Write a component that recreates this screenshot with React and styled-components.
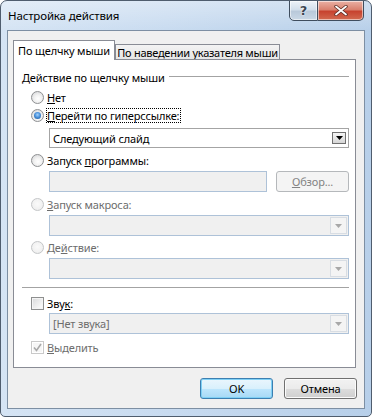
import React from "react";
import styled, { createGlobalStyle } from "styled-components";

const FONT = `"Segoe UI", "Noto Sans", "DejaVu Sans", sans-serif`;

const GlobalStyle = createGlobalStyle`
  html, body { margin: 0; padding: 0; background: #ffffff; }
  body { font-family: ${FONT}; font-size: 11px; letter-spacing: -0.15px; color: #000; }
  * { box-sizing: border-box; }
  u { text-decoration: underline; text-underline-offset: 1px; text-decoration-thickness: 1px; }
`;

const Window = styled.div`
  width: 372px;
  height: 417px;
  display: flex;
  flex-direction: column;
  border: 1px solid #4f5d6e;
  border-radius: 7px 7px 5px 5px;
  background:
    linear-gradient(180deg, rgba(255,255,255,0.35), rgba(255,255,255,0) 30px),
    linear-gradient(90deg, #d5e4f4 0%, #c8dbf0 45%, #b7cfe9 100%);
  padding: 0 6px 7px 6px;
  overflow: hidden;
`;

const TitleBar = styled.div`
  height: 29px;
  display: flex;
  align-items: flex-start;
  justify-content: space-between;
`;

const Title = styled.div`
  line-height: 30px;
  padding-left: 1px;
  font-size: 11.5px;
  color: #000;
`;

const CaptionButtons = styled.div`
  display: flex;
  margin-top: -1px;
  margin-right: 1px;
`;

const CaptionButton = styled.div`
  height: 21px;
  width: ${p => (p.$close ? "46px" : "29px")};
  display: flex;
  align-items: center;
  justify-content: center;
  border: 1px solid #3f4d5e;
  border-left: ${p => (p.$close ? "none" : "1px solid #3f4d5e")};
  border-radius: ${p => (p.$close ? "0 0 5px 0" : "0 0 0 5px")};
  background: ${p =>
    p.$close
      ? "linear-gradient(180deg, #eab1a5 0%, #d9816f 45%, #c7432f 55%, #d26a50 100%)"
      : "linear-gradient(180deg, #eef3f8 0%, #d3dfeb 45%, #b9c9da 55%, #cad8e6 100%)"};
  box-shadow: inset 0 0 0 1px rgba(255,255,255,0.55);
`;

const HelpGlyph = styled.span`
  font-family: "DejaVu Sans", sans-serif;
  font-weight: bold;
  font-size: 13px;
  line-height: 1;
  color: #3b4552;
  text-shadow: 0 0 1px #fff, 0 0 2px #fff;
`;

const Client = styled.div`
  flex: 1;
  display: flex;
  flex-direction: column;
  background: #f0f0f0;
  border: 1px solid #7d8fa3;
  padding: 9px 8px 0 5px;
`;

const TabStrip = styled.div`
  display: flex;
  align-items: flex-end;
  height: 19px;
`;

const Tab = styled.div`
  flex: none;
  width: ${p => (p.$active ? "102px" : "165px")};
  height: ${p => (p.$active ? "20px" : "15px")};
  margin-bottom: ${p => (p.$active ? "-1px" : "0")};
  position: relative;
  z-index: ${p => (p.$active ? 1 : 0)};
  border: 1px solid #898c95;
  border-bottom: none;
  background: ${p => (p.$active ? "#ffffff" : "linear-gradient(180deg, #f3f3f3 0%, #e6e6e6 100%)")};
  display: flex;
  align-items: center;
  justify-content: center;
  white-space: nowrap;
  overflow: hidden;
  line-height: 1;
  letter-spacing: ${p => (p.$active ? "-0.15px" : "-0.25px")};
  padding-top: ${p => (p.$active ? "0" : "1px")};
`;

const Panel = styled.div`
  height: 309px;
  flex: none;
  display: flex;
  flex-direction: column;
  background: #ffffff;
  border: 1px solid #898c95;
  padding: 9px 6px 0 8px;
`;

const GroupHeader = styled.div`
  height: 16px;
  display: flex;
  align-items: center;
  gap: 4px;
  white-space: nowrap;
`;

const GroupLine = styled.div`
  flex: 1;
  height: 1px;
  margin-top: -1px;
  background: #a3a3a3;
`;

const Separator = styled.div`
  height: 1px;
  background: #a3a3a3;
  margin-top: ${p => p.$mt}px;
`;

const OptionRow = styled.div`
  height: 16px;
  display: flex;
  align-items: center;
  gap: 1px;
  padding-left: 9px;
  margin-top: ${p => p.$mt}px;
  color: ${p => (p.$disabled ? "#6d6d6d" : "#000")};
  white-space: nowrap;
`;

const OptionLabel = styled.span`
  border: 1px ${p => (p.$focus ? "dotted #000" : "solid transparent")};
  line-height: 13px;
  padding-right: 1px;
`;

const RadioCircle = styled.span`
  width: 13px;
  height: 13px;
  flex: none;
  margin-right: 1px;
  border-radius: 50%;
  position: relative;
  border: 1px solid ${p => (p.$disabled ? "#c4c6c8" : "#8e9092")};
  background: ${p =>
    p.$disabled
      ? "radial-gradient(circle at 50% 45%, #fafafa 0%, #f1f1f1 60%, #e6e6e6 100%)"
      : "radial-gradient(circle at 55% 60%, #ffffff 0%, #f2f2f2 40%, #cfd0d2 100%)"};
  &::after {
    content: "";
    display: ${p => (p.$checked ? "block" : "none")};
    position: absolute;
    left: 2px;
    top: 2px;
    width: 7px;
    height: 7px;
    border-radius: 50%;
    background: radial-gradient(circle at 50% 40%, #a6d3fb 0%, #4c93dd 45%, #18508d 100%);
  }
`;

const CheckBox = styled.span`
  width: 13px;
  height: 13px;
  flex: none;
  margin-right: 1px;
  display: flex;
  align-items: center;
  justify-content: center;
  border: 1px solid ${p => (p.$disabled ? "#c9c9c9" : "#8e8f8f")};
  background: ${p =>
    p.$disabled
      ? "#f6f6f6"
      : "linear-gradient(135deg, #d8d9db 0%, #ececec 50%, #ffffff 100%)"};
  box-shadow: inset 0 0 0 1px ${p => (p.$disabled ? "#ffffff" : "#f4f4f4")};
`;

const Indented = styled.div`
  margin-left: 27px;
  margin-top: ${p => p.$mt}px;
  display: flex;
  gap: 9px;
`;

const Combo = styled.div`
  flex: 1;
  height: ${p => p.$h || 21}px;
  display: flex;
  align-items: center;
  border: 1px solid ${p => (p.$disabled ? "#aec2d8" : "#a4a4a4")};
  background: ${p => (p.$disabled ? "#f0f0f0" : "#ffffff")};
  color: ${p => (p.$disabled ? "#6d6d6d" : "#000")};
  padding: 0 1px 0 3px;
`;

const ComboText = styled.span`
  flex: 1;
  white-space: nowrap;
`;

const ArrowBox = styled.span`
  flex: none;
  width: ${p => (p.$disabled ? "17px" : "14px")};
  height: ${p => (p.$disabled ? "17px" : "12px")};
  margin-right: ${p => (p.$disabled ? "0" : "1px")};
  display: flex;
  align-items: center;
  justify-content: center;
  border: 1px solid ${p => (p.$disabled ? "#d8dde3" : "#707070")};
  background: ${p =>
    p.$disabled ? "#f4f4f4" : "linear-gradient(180deg, #f4f4f4 0%, #e6e6e6 50%, #d6d6d6 100%)"};
`;

const TextField = styled.div`
  flex: 1;
  height: 21px;
  border: 1px solid #aec2d8;
  background: #f0f0f0;
`;

const BrowseButton = styled.div`
  width: 73px;
  height: 21px;
  flex: none;
  display: flex;
  align-items: center;
  justify-content: center;
  border: 1px solid #b5b8bb;
  border-radius: 3px;
  background: #f4f4f4;
  color: #838383;
`;

const Footer = styled.div`
  display: flex;
  justify-content: flex-end;
  gap: 11px;
  margin-top: 10px;
  margin-right: -1px;
`;

const DialogButton = styled.div`
  width: 73px;
  height: 21px;
  display: flex;
  align-items: center;
  justify-content: center;
  border-radius: 3px;
  border: 1px solid ${p => (p.$default ? "#3c7fb1" : "#707070")};
  background: ${p =>
    p.$default
      ? "linear-gradient(180deg, #eaf6fd 0%, #d9f0fc 50%, #bee6fd 50%, #a7d9f5 100%)"
      : "linear-gradient(180deg, #f2f2f2 0%, #ebebeb 50%, #dddddd 50%, #cfcfcf 100%)"};
  box-shadow: inset 0 0 0 1px ${p => (p.$default ? "#7fd0f5" : "#fbfbfb")};
  color: #000;
`;

const Arrow = ({ disabled }) => (
  <svg width="7" height="4" viewBox="0 0 7 4">
    <path d="M0 0 H7 L3.5 4 Z" fill={disabled ? "#a8a8a8" : "#000"} />
  </svg>
);

const Radio = ({ checked, disabled, focus, mt, children }) => (
  <OptionRow $mt={mt} $disabled={disabled}>
    <RadioCircle $checked={checked} $disabled={disabled} />
    <OptionLabel $focus={focus}>{children}</OptionLabel>
  </OptionRow>
);

const Check = ({ checked, disabled, mt, children }) => (
  <OptionRow $mt={mt} $disabled={disabled}>
    <CheckBox $disabled={disabled}>
      {checked && (
        <svg width="9" height="9" viewBox="0 0 9 9">
          <path d="M1 4.5 L3.5 7.5 L8 1" fill="none" stroke={disabled ? "#a9a9a9" : "#1c3f7c"} strokeWidth="1.6" />
        </svg>
      )}
    </CheckBox>
    <OptionLabel>{children}</OptionLabel>
  </OptionRow>
);

const ComboBox = ({ text, disabled, h, mt }) => (
  <Indented $mt={mt}>
    <Combo $disabled={disabled} $h={h}>
      <ComboText>{text}</ComboText>
      <ArrowBox $disabled={disabled}>
        <Arrow disabled={disabled} />
      </ArrowBox>
    </Combo>
  </Indented>
);

export default function App() {
  return (
    <>
      <GlobalStyle />
      <Window>
        <TitleBar>
          <Title>Настройка действия</Title>
          <CaptionButtons>
            <CaptionButton>
              <HelpGlyph>?</HelpGlyph>
            </CaptionButton>
            <CaptionButton $close>
              <svg width="14" height="11" viewBox="0 0 14 11">
                <path d="M2 1.5 L12 9.5 M12 1.5 L2 9.5" stroke="#5a2a22" strokeWidth="3.4" strokeLinecap="round" />
                <path d="M2 1.5 L12 9.5 M12 1.5 L2 9.5" stroke="#ffffff" strokeWidth="1.8" strokeLinecap="round" />
              </svg>
            </CaptionButton>
          </CaptionButtons>
        </TitleBar>
        <Client>
          <TabStrip>
            <Tab $active>По щелчку мыши</Tab>
            <Tab>По наведении указателя мыши</Tab>
          </TabStrip>
          <Panel>
            <GroupHeader>
              <span>Действие по щелчку мыши</span>
              <GroupLine />
            </GroupHeader>
            <Radio mt={4}>
              <u>Н</u>ет
            </Radio>
            <Radio mt={2} checked focus>
              <u>П</u>ерейти по гиперссылке:
            </Radio>
            <ComboBox mt={5} h={20} text="Следующий слайд" />
            <Radio mt={4}>
              Запуск <u>п</u>рограммы:
            </Radio>
            <Indented $mt={3}>
              <TextField />
              <BrowseButton>
                <span>
                  <u>О</u>бзор...
                </span>
              </BrowseButton>
            </Indented>
            <Radio mt={4} disabled>
              <u>З</u>апуск макроса:
            </Radio>
            <ComboBox mt={3} disabled text="" />
            <Radio mt={3} disabled>
              Де<u>й</u>ствие:
            </Radio>
            <ComboBox mt={3} disabled text="" />
            <Separator $mt={8} />
            <Check mt={7}>
              Зву<u>к</u>:
            </Check>
            <ComboBox mt={2} disabled text="[Нет звука]" />
            <Check mt={5} checked disabled>
              <u>В</u>ыделить
            </Check>
          </Panel>
          <Footer>
            <DialogButton $default>OK</DialogButton>
            <DialogButton>Отмена</DialogButton>
          </Footer>
        </Client>
      </Window>
    </>
  );
}
